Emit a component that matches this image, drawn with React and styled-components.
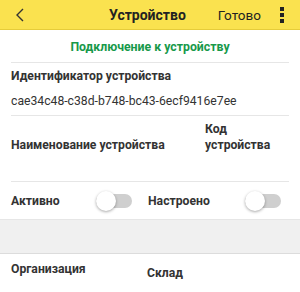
import React from "react";
import styled, { createGlobalStyle } from "styled-components";

const Global = createGlobalStyle`
  body {
    margin: 0;
    background: #fff;
    font-family: Roboto, "Liberation Sans", sans-serif;
    color: #333;
  }
`;

const App = () => {
  return (
    <Screen>
      <Global />
      <Header>
        <Back>
          <svg width="10" height="14" viewBox="0 0 10 14">
            <path d="M8 1 L2 7 L8 13" fill="none" stroke="#333" strokeWidth="1.4" />
          </svg>
        </Back>
        <Title>Устройство</Title>
        <Done>Готово</Done>
        <Kebab>
          <Dot />
          <Dot />
          <Dot />
        </Kebab>
      </Header>

      <Caption>Подключение к устройству</Caption>

      <Body>
        <Section>
          <Label>Идентификатор устройства</Label>
          <Value>cae34c48-c38d-b748-bc43-6ecf9416e7ee</Value>
        </Section>

        <Pair>
          <Label $top={16}>Наименование устройства</Label>
          <Label>
            Код
            <br />
            устройства
          </Label>
        </Pair>

        <SwitchRow>
          <SwitchCell $pad={16}>
            <Label>Активно</Label>
            <Toggle />
          </SwitchCell>
          <SwitchCell $pad={8}>
            <Label>Настроено</Label>
            <Toggle />
          </SwitchCell>
        </SwitchRow>
      </Body>

      <Gap />

      <Bottom>
        <Label>Организация</Label>
        <Label $top={4}>Склад</Label>
      </Bottom>
    </Screen>
  );
};

const Toggle = () => (
  <Track>
    <Knob />
  </Track>
);

export default App;

const Screen = styled.div`
  width: 300px;
  height: 292px;
  overflow: hidden;
  background: #fff;
`;

const Header = styled.div`
  height: 29px;
  background: #fae24f;
  border-bottom: 1px solid #e6cc3a;
  display: flex;
  align-items: center;
  padding: 0 0 0 15px;
`;

const Back = styled.div`
  width: 12px;
  display: flex;
  align-items: center;
  margin-top: 1px;
`;

const Title = styled.div`
  flex: 1;
  text-align: center;
  font-weight: 700;
  font-size: 14px;
  color: #222;
  padding-left: 50px;
`;

const Done = styled.div`
  font-size: 13.5px;
  color: #222;
  margin-right: 11px;
`;

const Kebab = styled.div`
  width: 20px;
  display: flex;
  flex-direction: column;
  align-items: center;
  gap: 2px;
  margin-right: 8px;
`;

const Dot = styled.div`
  width: 4px;
  height: 4px;
  background: #222;
`;

const Caption = styled.div`
  text-align: center;
  color: #17994a;
  font-weight: 700;
  font-size: 12.3px;
  padding: 10px 0 0;
  height: 22px;
`;

const Body = styled.div`
  padding: 0 11px;
`;

const Section = styled.div`
  border-top: 1px solid #e6e6e6;
  border-bottom: 1px solid #e6e6e6;
  padding: 5px 0 0;
  height: 47px;
`;

const Label = styled.div`
  font-size: 12.2px;
  font-weight: 700;
  color: #333;
  line-height: 16px;
  margin-top: ${(p) => p.$top || 0}px;
`;

const Value = styled.div`
  font-size: 12.2px;
  color: #333;
  line-height: 16px;
  margin-top: 9px;
`;

const Pair = styled.div`
  display: grid;
  grid-template-columns: 194px 1fr;
  border-bottom: 1px solid #e6e6e6;
  padding-top: 5px;
  height: 60px;
`;

const SwitchRow = styled.div`
  display: grid;
  grid-template-columns: 137px 1fr;
  height: 37px;
  align-items: center;
`;

const SwitchCell = styled.div`
  display: flex;
  align-items: center;
  justify-content: space-between;
  padding-right: ${(p) => p.$pad}px;
`;

const Track = styled.div`
  position: relative;
  width: 36px;
  height: 14px;
  border-radius: 7px;
  background: #cfcfcf;
`;

const Knob = styled.div`
  position: absolute;
  left: 0;
  top: -3px;
  width: 20px;
  height: 20px;
  border-radius: 50%;
  background: #fff;
  box-shadow: 0 1px 3px rgba(0, 0, 0, 0.35);
`;

const Gap = styled.div`
  height: 33px;
  background: #f0f0f0;
  border-top: 1px solid #e6e6e6;
  border-bottom: 1px solid #dcdcdc;
`;

const Bottom = styled.div`
  display: grid;
  grid-template-columns: 136px 1fr;
  padding: 7px 11px 0;
`;
